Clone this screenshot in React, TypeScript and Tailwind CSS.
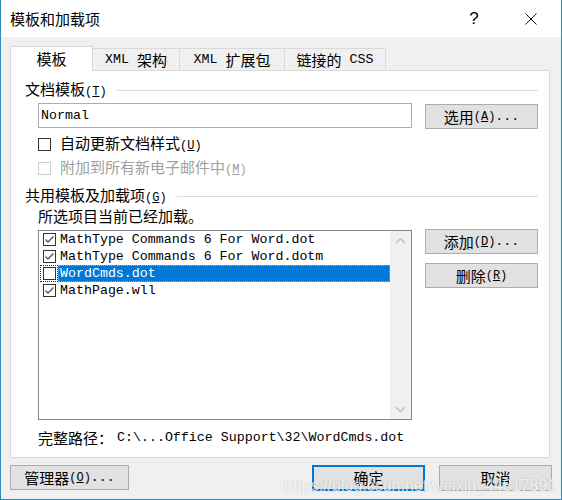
import React from "react";

const mono = "font-['Liberation_Mono',monospace] text-[13.3px]";

// accelerator like (T) with underlined letter
const K = ({ k }: { k: string }) => (
  <span className="font-['Liberation_Mono',monospace] text-[12px]">
    (<span className="underline underline-offset-[1px]">{k}</span>)
  </span>
);

const Btn = ({ children, className = "" }: { children: React.ReactNode; className?: string }) => (
  <div
    className={
      "w-[113px] h-[25px] bg-[#e1e1e1] border border-[#adadad] flex items-center justify-center " + className
    }
  >
    {children}
  </div>
);

const Check = () => (
  <svg width="11" height="11" viewBox="0 0 11 11">
    <polyline points="1.5,5.5 4,8 9.5,2.5" fill="none" stroke="#555" strokeWidth="1.4" />
  </svg>
);

const items = [
  { name: "MathType Commands 6 For Word.dot", checked: true },
  { name: "MathType Commands 6 For Word.dotm", checked: true },
  { name: "WordCmds.dot", checked: false, selected: true },
  { name: "MathPage.wll", checked: true },
];

export default function App() {
  return (
    <div className="relative w-[562px] h-[500px] bg-[#f0f0f0] border-x border-b border-[#2b8cb6] flex flex-col font-['Noto_Sans_CJK_SC',sans-serif] text-[15px] leading-[20px] text-black overflow-hidden">
      {/* title bar */}
      <div className="h-[37px] shrink-0 bg-white flex items-center pl-[9px] pr-[15px]">
        <span>模板和加载项</span>
        <span className="ml-auto w-[30px] text-center font-['Liberation_Sans',sans-serif] text-[17px]">?</span>
        <div className="ml-[27px] w-[30px] flex justify-center">
          <svg width="12" height="12" viewBox="0 0 12 12">
            <path d="M0.5 0.5 L11.5 11.5 M11.5 0.5 L0.5 11.5" stroke="#111" strokeWidth="1" />
          </svg>
        </div>
      </div>

      {/* tabs */}
      <div className="h-[33px] shrink-0 flex items-end pl-[9px] relative z-10">
        <div className="h-[25px] w-[83px] mb-[-1px] bg-white border border-b-0 border-[#d9d9d9] flex items-center justify-center pb-[1px]">
          模板
        </div>
        <div className="h-[22px] w-[88px] -ml-px border border-b-0 border-[#d9d9d9] flex items-center justify-center">
          <span className={mono}>XML&nbsp;</span>架构
        </div>
        <div className="h-[22px] w-[106px] -ml-px border border-b-0 border-[#d9d9d9] flex items-center justify-center">
          <span className={mono}>XML&nbsp;</span>扩展包
        </div>
        <div className="h-[22px] w-[102px] -ml-px border border-b-0 border-[#d9d9d9] flex items-center justify-center">
          链接的<span className={mono}>&nbsp;CSS</span>
        </div>
      </div>

      {/* panel */}
      <div className="ml-[9px] w-[540px] h-[388px] shrink-0 bg-white border border-[#d9d9d9] flex flex-col pl-[14px] pr-[11px]">
        <div className="mt-[9px] h-[20px] flex items-center">
          <span>
            文档模板<K k="T" />
          </span>
          <div className="flex-1 h-px bg-[#dcdcdc] ml-[10px]" />
        </div>

        <div className="mt-[3px] flex items-start pl-[13px]">
          <div className={"w-[374px] h-[25px] border border-[#adadad] flex items-center pl-[2px] " + mono}>Normal</div>
          <Btn className="ml-[13px] mt-[1px]">
            选用<K k="A" />
            <span className={mono}>...</span>
          </Btn>
        </div>

        <div className="mt-[5px] h-[20px] flex items-center pl-[13px]">
          <div className="w-[13px] h-[13px] border border-[#333]" />
          <span className="ml-[9px]">
            自动更新文档样式<K k="U" />
          </span>
        </div>
        <div className="mt-[4px] h-[20px] flex items-center pl-[13px] text-[#a0a0a0]">
          <div className="w-[13px] h-[13px] border border-[#cccccc]" />
          <span className="ml-[9px]">
            附加到所有新电子邮件中<K k="M" />
          </span>
        </div>

        <div className="mt-[8px] h-[20px] flex items-center">
          <span>
            共用模板及加载项<K k="G" />
          </span>
          <div className="flex-1 h-px bg-[#dcdcdc] ml-[10px]" />
        </div>
        <div className="h-[20px] flex items-center pl-[13px]">所选项目当前已经加载。</div>

        <div className="mt-[3px] flex items-start pl-[13px]">
          <div className="mt-[1px] w-[374px] h-[190px] border border-[#828790] flex">
            <div className="flex-1 flex flex-col">
              {items.map((it) => (
                <div key={it.name} className="h-[17px] flex items-stretch">
                  <div
                    className={
                      "ml-[1px] w-[18px] flex items-center justify-center border border-dotted " +
                      (it.selected ? "border-[#222]" : "border-transparent")
                    }
                  >
                    <div className="w-[13px] h-[13px] border border-[#333] flex items-center justify-center">
                      {it.checked && <Check />}
                    </div>
                  </div>
                  <div
                    className={
                      "flex-1 flex items-center pl-[1px] leading-[17px] border border-dotted " +
                      mono +
                      (it.selected ? " bg-[#0078d7] text-white border-[#f7a13a]" : " border-transparent")
                    }
                  >
                    {it.name}
                  </div>
                </div>
              ))}
            </div>
            <div className="w-[21px] bg-[#f0f0f0] flex flex-col justify-between items-center py-[6px]">
              <svg width="11" height="7" viewBox="0 0 11 7">
                <polyline points="1,6 5.5,1.5 10,6" fill="none" stroke="#c2c2c2" strokeWidth="1.5" />
              </svg>
              <svg width="11" height="7" viewBox="0 0 11 7">
                <polyline points="1,1 5.5,5.5 10,1" fill="none" stroke="#c2c2c2" strokeWidth="1.5" />
              </svg>
            </div>
          </div>
          <div className="ml-[13px] flex flex-col">
            <Btn>
              添加<K k="D" />
              <span className={mono}>...</span>
            </Btn>
            <Btn className="mt-[9px]">
              删除<K k="R" />
            </Btn>
          </div>
        </div>

        <div className="mt-[8px] h-[20px] flex items-center pl-[13px]">
          完整路径：<span className={"ml-[4px] " + mono}>C:\...Office Support\32\WordCmds.dot</span>
        </div>
      </div>

      {/* bottom buttons */}
      <div className="mt-[7px] flex pl-[9px]">
        <div className="w-[119px] h-[25px] bg-[#e1e1e1] border border-[#adadad] flex items-center justify-center">
          管理器<K k="O" />
          <span className={mono}>...</span>
        </div>
        <div className="ml-[183px] w-[113px] h-[26px] bg-[#e1e1e1] border-2 border-[#0078d7] flex items-center justify-center">
          确定
        </div>
        <Btn className="ml-[14px] h-[26px]">取消</Btn>
      </div>

      {/* watermark */}
      <div className="absolute left-[283px] top-[476px] font-['Liberation_Sans',sans-serif] text-[16px] leading-[20px] text-white/75 [text-shadow:0_0_2px_rgba(0,0,0,0.2)] pointer-events-none">
        https://blog.csdn.net/weixin_44817891
      </div>
    </div>
  );
}
